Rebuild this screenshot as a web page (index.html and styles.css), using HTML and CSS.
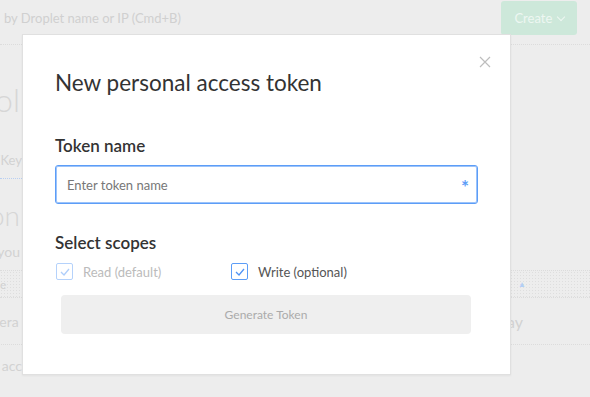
FILE: index.html
```html
<!DOCTYPE html>
<html lang="en">

<head>
    <meta charset="UTF-8">
    <meta name="viewport" content="width=device-width, initial-scale=1.0">
    <title>New personal access token</title>
    <link rel="stylesheet" href="styles.css">
</head>

<body>
    <!-- Faded page behind the modal -->
    <div class="page">
        <div class="topbar">
            <span class="search">by Droplet name or IP (Cmd+B)</span>
            <button class="create-button">Create <span class="chevron"></span></button>
        </div>
        <div class="rule"></div>
        <div class="page-title"><span>Tool</span></div>
        <div class="tabs"><span>Tokens/Key</span></div>
        <div class="section-title"><span>Person</span></div>
        <div class="section-text"><span>you</span></div>
        <div class="table-head"><span>e</span><span class="sort">&#9650;</span></div>
        <div class="table-row"><span>Genera</span><span class="right-text">ay</span></div>
        <div class="table-foot"><span>l acc</span></div>
    </div>

    <!-- Modal -->
    <div class="modal">
        <button class="close" aria-label="Close">
            <svg width="12" height="12" viewBox="0 0 12 12">
                <path d="M1 1 L11 11 M11 1 L1 11" stroke="#bdbdbd" stroke-width="1.2" fill="none" />
            </svg>
        </button>
        <h1>New personal access token</h1>

        <label class="field-label" for="token-name">Token name</label>
        <div class="input-wrap">
            <input type="text" id="token-name" placeholder="Enter token name">
            <span class="required">*</span>
        </div>

        <h2 class="field-label scopes-label">Select scopes</h2>
        <div class="scopes">
            <div class="scope disabled">
                <span class="checkbox">
                    <svg width="10" height="8" viewBox="0 0 10 8">
                        <path d="M1 4 L4 7 L9 1" stroke="#4f93f5" stroke-width="1.3" fill="none" />
                    </svg>
                </span>
                <span>Read (default)</span>
            </div>
            <div class="scope">
                <span class="checkbox">
                    <svg width="10" height="8" viewBox="0 0 10 8">
                        <path d="M1 4 L4 7 L9 1" stroke="#4f93f5" stroke-width="1.3" fill="none" />
                    </svg>
                </span>
                <span>Write (optional)</span>
            </div>
        </div>

        <button class="generate-button" disabled>Generate Token</button>
    </div>
</body>

</html>
```

FILE: styles.css
```css
body {
    margin: 0;
    background-color: #ededed;
    font-family: 'Lato', 'Open Sans', sans-serif;
    color: #333;
    overflow: hidden;
}

/* background page */

.page {
    height: 397px;
    color: #d2d2d2;
}

.topbar {
    display: flex;
    justify-content: space-between;
    align-items: center;
    height: 36px;
    padding: 0 13px 0 4px;
}

.search {
    font-size: 13px;
    color: #d0d0d0;
}

.create-button {
    background-color: #cde8da;
    color: #eef7f2;
    border: none;
    border-radius: 3px;
    width: 76px;
    height: 34px;
    margin-top: -1px;
    font-family: inherit;
    font-size: 13px;
}

.chevron {
    display: inline-block;
    width: 5px;
    height: 5px;
    border-right: 1px solid #eef7f2;
    border-bottom: 1px solid #eef7f2;
    transform: rotate(45deg);
    margin: 0 0 3px 2px;
}

.rule {
    margin-top: 8px;
    border-top: 1px dotted #dcdcdc;
}

.page-title,
.tabs,
.section-title,
.section-text,
.table-foot {
    display: flex;
    justify-content: flex-end;
    width: 20px;
    white-space: nowrap;
}

.page-title {
    margin-top: 37px;
    font-size: 32px;
    font-weight: 300;
    line-height: 36px;
    color: #d6d6d6;
    height: 36px;
}

.tabs {
    margin-top: 32px;
    font-size: 13px;
    line-height: 20px;
    height: 28px;
    width: 22px;
    border-bottom: 1px dotted #b9cff2;
}

.section-title {
    margin-top: 19px;
    font-size: 28px;
    font-weight: 300;
    line-height: 34px;
    color: #d6d6d6;
    height: 34px;
}

.section-text {
    margin-top: 10px;
    font-size: 14px;
    line-height: 20px;
    height: 20px;
}

.table-head {
    display: flex;
    justify-content: space-between;
    align-items: center;
    margin-top: 8px;
    height: 26px;
    padding: 0 64px 0 0;
    font-size: 12px;
    background-image: radial-gradient(#dedede 0.6px, transparent 0.8px);
    background-size: 3px 3px;
    border-top: 1px dotted #dcdcdc;
    border-bottom: 1px dotted #dcdcdc;
}

.sort {
    color: #b3cff5;
    font-size: 8px;
}

.table-row {
    display: flex;
    justify-content: space-between;
    align-items: center;
    height: 46px;
    font-size: 14px;
    padding-right: 67px;
    border-bottom: 1px dotted #dcdcdc;
    margin-left: -26px;
}

.right-text {
    font-size: 16px;
}

.table-foot {
    margin-top: 11px;
    font-size: 14px;
    line-height: 20px;
    width: 22px;
}

/* modal */

.modal {
    position: absolute;
    top: 34px;
    left: 22px;
    width: 423px;
    padding: 35px 32px 40px 32px;
    background-color: #fff;
    border: 1px solid #e0e0e0;
    box-shadow: 0px 1px 2px rgba(0, 0, 0, 0.05);
}

.close {
    position: absolute;
    top: 21px;
    right: 19px;
    background: none;
    border: none;
    padding: 0;
    width: 12px;
    height: 12px;
    display: flex;
}

h1 {
    margin: 0;
    font-size: 22.5px;
    font-weight: 400;
    line-height: 26px;
    color: #333;
}

.field-label {
    display: block;
    margin: 40px 0 0 0;
    font-size: 17px;
    font-weight: 600;
    line-height: 20px;
    color: #333;
}

.input-wrap {
    position: relative;
    margin-top: 9px;
}

input[type="text"] {
    box-sizing: border-box;
    width: 100%;
    height: 39px;
    padding: 0 30px 0 11px;
    border: 1px solid #5c9df7;
    border-radius: 3px;
    box-shadow: inset 0 0 0 1px #9cc3fa;
    font-family: inherit;
    font-size: 13px;
    color: #333;
    outline: none;
}

input[type="text"]::placeholder {
    color: #777;
}

.required {
    position: absolute;
    right: 9px;
    top: 10px;
    color: #5c9df7;
    font-size: 19px;
    font-weight: 700;
}

.scopes-label {
    margin-top: 29px;
}

.scopes {
    display: flex;
    margin-top: 10px;
    padding-left: 1px;
}

.scope {
    display: flex;
    align-items: center;
    gap: 10px;
    width: 175px;
    font-size: 13px;
    color: #555;
}

.scope.disabled {
    color: #bbb;
}

.checkbox {
    display: flex;
    justify-content: center;
    align-items: center;
    box-sizing: border-box;
    width: 17px;
    height: 17px;
    border: 1px solid #5c9df7;
    border-radius: 2px;
    background-color: #fff;
}

.scope.disabled .checkbox {
    opacity: 0.45;
}

.generate-button {
    display: block;
    width: 410px;
    height: 39px;
    margin: 15px 0 0 6px;
    background-color: #efefef;
    border: none;
    border-radius: 4px;
    color: #ababab;
    font-family: inherit;
    font-size: 12px;
}
```
